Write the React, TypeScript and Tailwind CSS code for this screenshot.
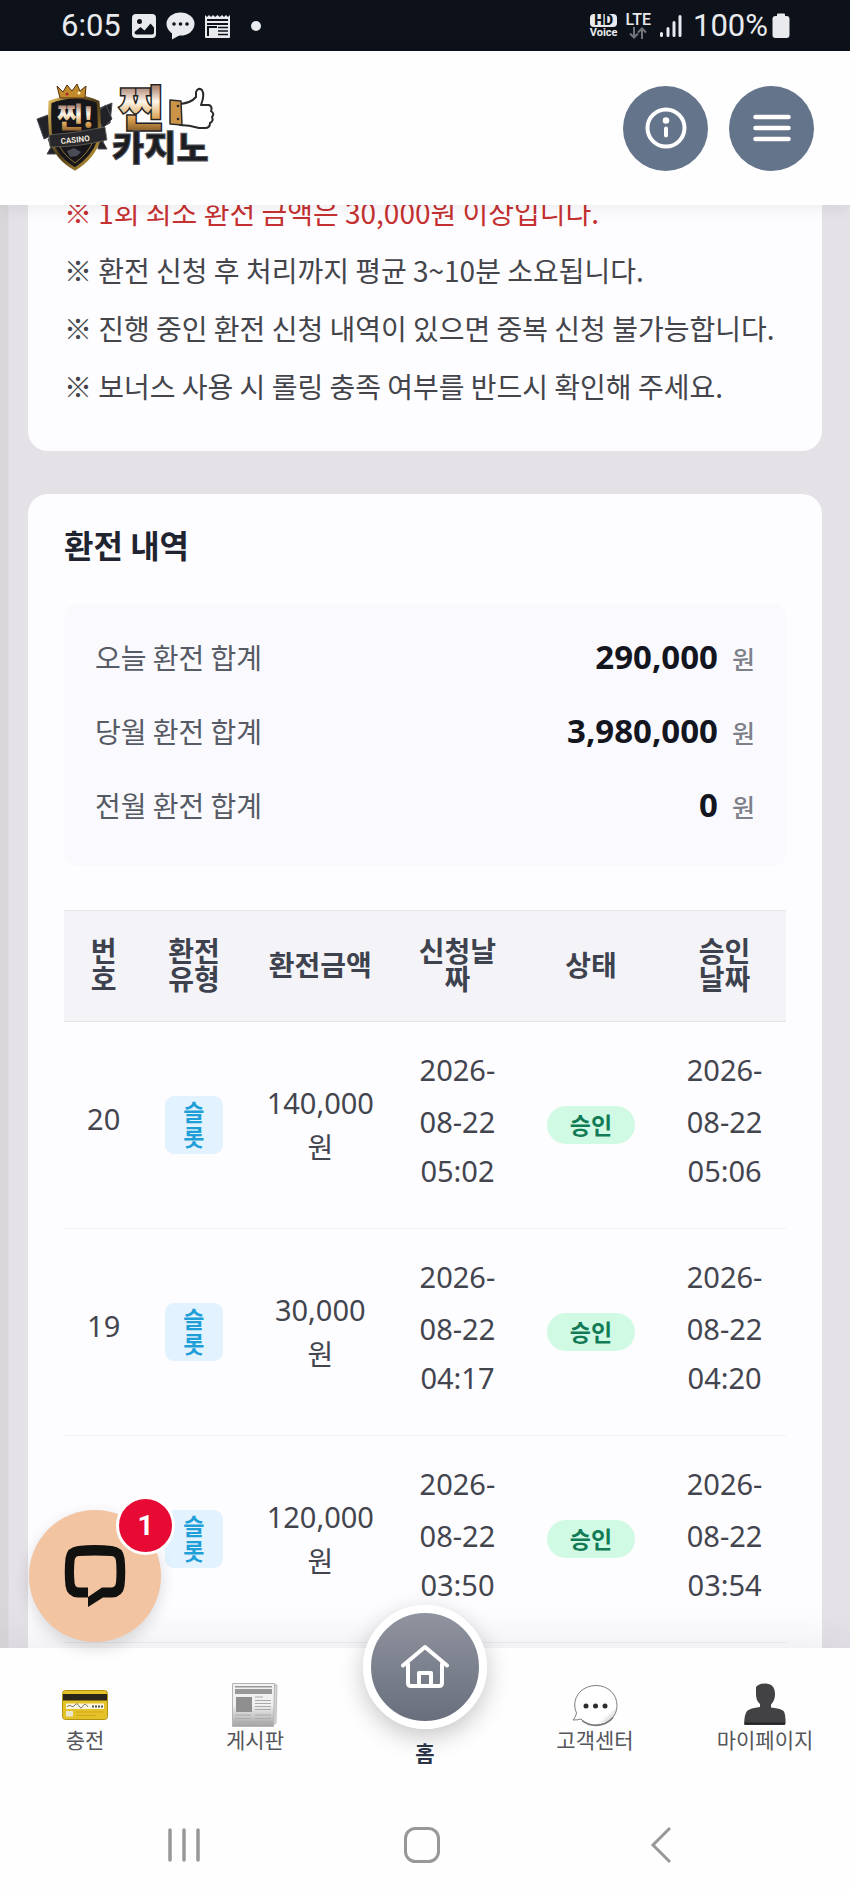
const notices = [
  { text: '※ 1회 최소 환전 금액은 30,000원 이상입니다.', warn: true },
  { text: '※ 환전 신청 후 처리까지 평균 3~10분 소요됩니다.' },
  { text: '※ 진행 중인 환전 신청 내역이 있으면 중복 신청 불가능합니다.' },
  { text: '※ 보너스 사용 시 롤링 충족 여부를 반드시 확인해 주세요.' },
]

const totals = [
  { label: '오늘 환전 합계', amount: '290,000' },
  { label: '당월 환전 합계', amount: '3,980,000' },
  { label: '전월 환전 합계', amount: '0' },
]

const rows = [
  { id: 20, amount: '140,000', requested: ['2026-08-22', '05:02'], approved: ['2026-08-22', '05:06'] },
  { id: 19, amount: '30,000', requested: ['2026-08-22', '04:17'], approved: ['2026-08-22', '04:20'] },
  // the floating chat button covers this row's number
  { id: null, amount: '120,000', requested: ['2026-08-22', '03:50'], approved: ['2026-08-22', '03:54'] },
]

const StatusBar = () => (
  <div className="flex h-[51px] items-center justify-between bg-[#0d121a] pr-[60px] pl-[61px] font-[Roboto,sans-serif] text-[31px] leading-none text-[#e8eaed]">
    <div className="flex items-center">
      <span>6:05</span>
      <svg className="ml-[10px]" width="26" height="26" viewBox="0 0 26 26">
        <rect x="1" y="1" width="24" height="24" rx="4" fill="#e8eaed" />
        <circle cx="8.5" cy="8.5" r="2.5" fill="#0d121a" />
        <path d="M3.5 19l6-5 4 3.5 6-7 3.5 4v5q0 2-2 2H5.500q-2 0-2-2.500z" fill="#0d121a" />
      </svg>
      <svg className="ml-[9px]" width="29" height="28" viewBox="0 0 29 28">
        <ellipse cx="14.5" cy="12" rx="14" ry="11.5" fill="#e8eaed" />
        <path d="M6 19v8.500l9-5z" fill="#e8eaed" />
        <circle cx="8" cy="12" r="1.8" fill="#0d121a" />
        <circle cx="14.5" cy="12" r="1.8" fill="#0d121a" />
        <circle cx="21" cy="12" r="1.8" fill="#0d121a" />
      </svg>
      <svg className="ml-[9px]" width="27" height="26" viewBox="0 0 27 26">
        <path d="M1 2l2 2 2-2 2 2 2-2 2.200 2 2.300-2 2.300 2L18 2l2 2 2-2 2 2 2-2v22q0 1-1 1H2q-1 0-1-1z" fill="#e8eaed" />
        <path d="M3 7h21M3 11h21" stroke="#0d121a" strokeWidth="2" />
        <path d="M3 13h10v10H3z" fill="#0d121a" />
        <path d="M5 15h8v8H5z" fill="#e8eaed" />
        <path d="M14 14.500h10M14 18h10M14 21.500h10" stroke="#0d121a" strokeWidth="1.5" />
      </svg>
      <span className="ml-5 h-[10px] w-[10px] rounded-full bg-[#e8eaed]" />
    </div>
    <div className="flex items-center">
      <span className="flex flex-col items-center">
        <span className="rounded-sm bg-[#e8eaed] px-1 text-[14px] leading-[13px] font-black text-[#0d121a]">HD</span>
        <span className="text-[11px] leading-[11px] font-bold">Voice</span>
      </span>
      <span className="ml-2 flex flex-col items-center">
        <span className="text-[16px] leading-[14px] font-medium">LTE</span>
        <svg width="20" height="12" viewBox="0 0 20 12" fill="none" stroke="#70747a" strokeWidth="2">
          <path d="M6 0v10M2 6.500l4 4 4-4M14 12V2M10 5.500l4-4 4 4" />
        </svg>
      </span>
      <svg className="ml-2" width="24" height="24" viewBox="0 0 24 24" stroke="#e8eaed" strokeWidth="3" strokeLinecap="round">
        <path d="M2.500 19.500v2M9 14.500v7M15 8.500v13M21 2.500v19" />
      </svg>
      <span className="ml-[10px]">100%</span>
      <svg className="ml-1" width="18" height="26" viewBox="0 0 18 26" fill="#e8eaed">
        <path d="M5 1.500Q5 .5 6 .5h6q1 0 1 1V3h1.500q3 0 3 3v16q0 3-3 3h-11q-3 0-3-3V6q0-3 3-3H5z" />
      </svg>
    </div>
  </div>
)

const Logo = () => (
  <svg width="178" height="88" viewBox="0 0 178 88" className="overflow-visible font-['Noto_Sans_CJK_KR',sans-serif]">
    <defs>
      <linearGradient id="gold" x1="0" y1="0" x2="0" y2="1">
        <stop offset="0.25" stopColor="#b08a78" />
        <stop offset="0.45" stopColor="#fff6ea" />
        <stop offset="0.7" stopColor="#d9a050" />
        <stop offset="0.9" stopColor="#7d5424" />
      </linearGradient>
      <linearGradient id="rim" x1="0" y1="0" x2="1" y2="1">
        <stop offset="0" stopColor="#e3bd5e" />
        <stop offset="0.5" stopColor="#4a3814" />
        <stop offset="1" stopColor="#d5aa45" />
      </linearGradient>
    </defs>
    <g fill="#222329" stroke="#4c4c52">
      <path d="M1 35l11-4 5 20-9 4z" />
      <path d="M64 24l12-5-2 20-9 5z" />
      <path d="M70 21l6 14-9 9-8-14z" />
      <path d="M12 55l8-3v18H11l4-7zM70 50l-8-3v18h9l-4-7z" />
    </g>
    <path d="M40 13q12 0 22 5 2 20 1 38-6 18-24 29-19-11-24-29-2-20-1-38 12-5 26-5z" fill="#17171b" stroke="url(#rim)" strokeWidth="3" />
    <path d="M20 55q5 14 19 24 14-10 19-24" fill="none" stroke="#8a7137" strokeWidth="1" />
    <path d="M21 2l6 6 4-7 5 6 5-7 3 7 6-5-1 12H24z" fill="#c18a2c" stroke="#52300d" />
    <circle cx="31" cy="10" r="1.5" fill="#b3262c" />
    <circle cx="43" cy="9" r="1.5" fill="#fff0bd" />
    <text x="21" y="44" fontSize="28" fontWeight="900" fill="url(#gold)">찐!</text>
    <path d="M13 51q28-2 56-8l2 13q-28 7-57 7z" fill="#28272b" stroke="#75705f" strokeWidth="0.7" />
    <text x="25" y="60" fontSize="8" fontWeight="700" fill="#eee9df" className="font-[Roboto,sans-serif]" transform="rotate(-6 25 60)">CASINO</text>
    <path d="M31 67l7-3 7 4-4 4-7 1z" fill="#4a4b54" />
    <text x="83" y="42" fontSize="48" fontWeight="900" fill="url(#gold)" stroke="#222" strokeWidth="3" paintOrder="stroke">찐</text>
    <text x="76" y="77" fontSize="35" fontWeight="900" fill="#1c1d21" stroke="#55565b" strokeWidth="1">카지노</text>
    <path d="M144 20q11-1 16-7V8q2-5 6-2 3 5-1 15h8q4 2 2 6 4 3 1 6 2 4-2 6 0 5-5 5h-6q-10-3-19-3z" fill="#fff" stroke="#2a2a2c" strokeWidth="2" strokeLinejoin="round" />
    <path d="M134 16l11 1 1 24-12-1z" fill="#cc9448" stroke="#2a2a2c" strokeWidth="1.5" strokeLinejoin="round" />
    <circle cx="142" cy="22" r="1.3" fill="#2a2a2c" />
    <circle cx="142" cy="35" r="1.3" fill="#2a2a2c" />
  </svg>
)

const Header = () => (
  <header className="relative z-10 flex h-[154px] items-center justify-between bg-[#fefefe] px-9 shadow-[0_2px_16px_rgba(0,0,0,0.08)]">
    <a href="#" aria-label="찐카지노">
      <Logo />
    </a>
    <div className="flex gap-[21px]">
      <button aria-label="안내" className="flex h-[85px] w-[85px] items-center justify-center rounded-full bg-[#64748b]">
        <svg width="42" height="42" viewBox="0 0 42 42" fill="none" stroke="#fff" strokeLinecap="round">
          <circle cx="21" cy="21" r="18.5" strokeWidth="4" />
          <path d="M21 21.500v7" strokeWidth="4" />
          <circle cx="21" cy="13.5" r="3.3" fill="#fff" stroke="none" />
        </svg>
      </button>
      <button aria-label="메뉴" className="flex h-[85px] w-[85px] items-center justify-center rounded-full bg-[#64748b]">
        <svg width="38" height="28" viewBox="0 0 38 28" stroke="#fff" strokeWidth="4.5" strokeLinecap="round">
          <path d="M2.500 3h33M2.500 14h33M2.500 25h33" />
        </svg>
      </button>
    </div>
  </header>
)

const DateCell = ({ value }) => (
  <td className="px-4 pt-[22px] pb-[34px]">
    <div className="leading-[52px]">{value[0]}</div>
    <div className="leading-[46px]">{value[1]}</div>
  </td>
)

const HistoryTable = () => (
  <table className="w-full table-fixed border-collapse text-center text-[29px] text-[#43454e]">
    <colgroup>
      <col className="w-[11%]" />
      <col className="w-[14%]" />
      <col className="w-[21%]" />
      <col className="w-[17%]" />
      <col className="w-[20%]" />
      <col className="w-[17%]" />
    </colgroup>
    <thead>
      <tr className="h-[111px] border-y border-[#e4e4e9] bg-[#f4f4f8] text-[28px] leading-7 text-[#3d424e]">
        {['번호', '환전 유형', '환전금액', '신청날짜', '상태', '승인 날짜'].map((name) => (
          <th key={name} className="px-5 pb-[3px] font-bold">
            {name}
          </th>
        ))}
      </tr>
    </thead>
    <tbody>
      {rows.map((row) => (
        <tr key={row.requested[1]} className="border-b border-[#f1f0f4]">
          <td className="pb-3">{row.id}</td>
          <td>
            <span className="inline-block w-[58px] rounded-[9px] bg-[#e2f2fe] px-4 py-1 align-middle text-[23px] leading-[25px] font-bold text-[#1f9fd8]">
              슬롯
            </span>
          </td>
          <td className="leading-[44px]">
            {row.amount}
            <span className="block text-[28px]">원</span>
          </td>
          <DateCell value={row.requested} />
          <td className="pb-[6px]">
            <span className="inline-block rounded-full bg-[#d1fae5] px-[23px] py-1 align-middle text-[23px] leading-[30px] font-bold text-[#127a55]">
              승인
            </span>
          </td>
          <DateCell value={row.approved} />
        </tr>
      ))}
    </tbody>
  </table>
)

const ChatButton = () => (
  <button
    aria-label="채팅 열기"
    className="absolute -top-[138px] left-[29px] z-20 flex h-[132px] w-[132px] items-center justify-center rounded-full bg-[#f2c4a1] shadow-[0_6px_16px_rgba(0,0,0,0.14)]"
  >
    <svg width="62" height="62" viewBox="0 0 62 62" fill="#11120f">
      <path
        fillRule="evenodd"
        d="M14 1Q31-1 48 1q11 1 12.500 12 1.500 14 0 28Q59 52 48 52.500h-9L24 62V52.500H14Q3 52 1.500 41 0 27 1.500 13 3 2 14 1zM15 11q-4 0-4.500 5-1 10 0 21 0 5.500 5 5.500H24V52l14-9.500h9q4.500 0 5-5 1-11 0-21.500-.5-5-5-5Q31 10 15 11z"
      />
    </svg>
    <span className="absolute -top-[14px] left-[87px] flex h-[59px] w-[59px] items-center justify-center rounded-full border-3 border-white bg-[#e60a35] font-[Roboto,sans-serif] text-[28px] font-bold text-white">
      1
    </span>
  </button>
)

const CardIcon = () => (
  <svg width="46" height="46" viewBox="0 0 46 46">
    <rect x="0.5" y="8.5" width="45" height="29" rx="3" fill="#e6c229" stroke="#b39312" />
    <path d="M1 12h44v6.500H1z" fill="#2b261a" />
    <path d="M4 21.500h38v5.500H4z" fill="#fbf6e0" />
    <path d="M5 25q2-3 4-1t4-1 4 1 4 0 5 1" fill="none" stroke="#777" />
    <path d="M30 24.500h11" stroke="#555" strokeWidth="2" strokeDasharray="2 1" />
    <path d="M4 29h7v5.500H4z" fill="#e8e6cf" />
    <path d="M14 30h27M14 33.500h20" stroke="#cfa91c" />
  </svg>
)

const NewsIcon = () => (
  <svg width="46" height="46" viewBox="0 0 46 46">
    <defs>
      <linearGradient id="paper" x1="0" y1="0" x2="0" y2="1">
        <stop offset="0.5" stopColor="#f1f1f1" />
        <stop offset="1" stopColor="#a3a3a3" />
      </linearGradient>
    </defs>
    <path d="M40 2l5 1-1 38-4 3z" fill="#d5d5d5" stroke="#aaa" strokeWidth="0.7" />
    <path d="M.5 1.500h42l-1 43H.5z" fill="url(#paper)" stroke="#b5b5b5" />
    <path d="M3 4h37v1.500H3zM3 7h37v5H3z" fill="#999" />
    <path d="M4 15h16v15H4z" fill="#8f8f8f" />
    <path d="M23 15h8M23 18.500h16M23 21.500h16M23 24.500h16M23 27.500h16M3 33h16M23 33h16M3 36.500h16M23 36.500h16M3 40h36" stroke="#aaa" />
  </svg>
)

const SupportIcon = () => (
  <svg width="46" height="46" viewBox="0 0 46 46">
    <defs>
      <linearGradient id="bubble" x1="0" y1="0" x2="1" y2="1">
        <stop offset="0.75" stopColor="#fff" />
        <stop offset="1" stopColor="#a0a0a0" />
      </linearGradient>
    </defs>
    <path d="M24 3.500C36 3.500 45 12 45 23.500S36 43 24 43c-6 0-11-2-15-6q-3 1-8 1 3-3 3.500-7-1.800-4-1.800-8C2.700 12 12 3.500 24 3.500z" fill="url(#bubble)" stroke="#808080" />
    <path d="M10 38.500q6 5 14 5 11-.5 17-8" fill="none" stroke="#777" strokeWidth="1.5" />
    <circle cx="14" cy="24" r="2.5" fill="#2c2c2c" />
    <circle cx="23.5" cy="24" r="2.5" fill="#2c2c2c" />
    <circle cx="33" cy="24" r="2.5" fill="#2c2c2c" />
  </svg>
)

const UserIcon = () => (
  <svg width="46" height="46" viewBox="0 0 46 46">
    <path d="M14 5q3-3.500 9-3.500 10 0 10 11 0 6-4 10v3q11 1 13 4 2 4 1.500 12.500-.5 1-2 1h-38q-1.500 0-1.500-1Q2.500 32 5 29q3-3 13-4v-3q-4-3-4-10z" fill="#424244" />
    <path d="M3 41.500h40" stroke="#252527" strokeWidth="2" />
  </svg>
)

const NavItem = ({ label, icon }) => (
  <a href="#" className="flex flex-1 flex-col items-center pt-[34px]">
    {icon}
    {label}
  </a>
)

const BottomNav = () => (
  <nav className="relative flex h-[142px] bg-[#fefefe] text-[21px] leading-6 text-[#55565b] shadow-[0_-4px_40px_rgba(40,40,60,0.09)]">
    <ChatButton />
    <NavItem label="충전" icon={<CardIcon />} />
    <NavItem label="게시판" icon={<NewsIcon />} />
    <a href="#" className="-mt-[43px] flex flex-1 flex-col items-center gap-3 font-bold text-[#2b3447]">
      <span className="flex h-[124px] w-[124px] items-center justify-center rounded-full border-8 border-white bg-linear-to-b from-[#9397a2] to-[#666c7a] bg-origin-border shadow-[0_8px_24px_rgba(0,0,0,0.22)]">
        <svg width="48" height="44" viewBox="0 0 48 44" fill="none" stroke="#fff" strokeWidth="4" strokeLinecap="round" strokeLinejoin="round">
          <path d="M2 20.500L24 2l22 18.500" />
          <path d="M7 19v19q0 3 3 3h28q3 0 3-3V19" />
          <path d="M18 41V28h12v13" />
        </svg>
      </span>
      홈
    </a>
    <NavItem label="고객센터" icon={<SupportIcon />} />
    <NavItem label="마이페이지" icon={<UserIcon />} />
  </nav>
)

const SystemBar = () => (
  <div className="relative grid h-[105px] grid-cols-3 place-items-center bg-[#fefefe] pt-1 pr-[70px] pl-[65px]">
    <button aria-label="최근 앱">
      <svg width="36" height="36" viewBox="0 0 36 36" stroke="#98989b" strokeWidth="3.5" strokeLinecap="round">
        <path d="M4 3v30M18 3v30M32 3v30" />
      </svg>
    </button>
    <button aria-label="홈 화면">
      <svg width="36" height="36" viewBox="0 0 36 36" fill="none" stroke="#98989b" strokeWidth="3">
        <rect x="1.5" y="1.5" width="33" height="33" rx="10" />
      </svg>
    </button>
    <button aria-label="뒤로">
      <svg width="22" height="38" viewBox="0 0 22 38" fill="none" stroke="#98989b" strokeWidth="3">
        <path d="M20 2L3 19l17 17" />
      </svg>
    </button>
  </div>
)

export default function App() {
  return (
    <div className="flex min-h-screen flex-col font-['Noto_Sans','Noto_Sans_CJK_KR',sans-serif]">
      <StatusBar />
      <Header />
      <main className="flex flex-1 flex-col overflow-hidden bg-linear-to-r from-[#d8d6d9] from-[8px] to-[#e4e2e7] to-[9px] px-7">
        <section className="-mt-[22px] rounded-[20px] bg-[#fdfcfe] px-9 pb-9 font-['Noto_Sans_CJK_KR',sans-serif] text-[28px] leading-[58px] text-[#43454b]">
          {notices.map((notice) => (
            <p key={notice.text} className={notice.warn ? 'text-[#c53030]' : ''}>
              {notice.text}
            </p>
          ))}
        </section>
        <section className="mt-[43px] flex-1 rounded-t-[20px] bg-[#fdfcfe] px-9 pt-[30px]">
          <h2 className="font-['Noto_Sans_CJK_KR',sans-serif] text-[32px] leading-10 font-bold text-[#1f2430]">환전 내역</h2>
          <dl className="mt-10 rounded-xl bg-[#fafafe] px-[31px] pt-7 pb-[38px]">
            {totals.map((total) => (
              <div key={total.label} className="mb-[26px] flex h-12 items-baseline justify-between last:mb-0">
                <dt className="font-['Noto_Sans_CJK_KR',sans-serif] text-[28px] text-[#565b65]">{total.label}</dt>
                <dd className="flex items-baseline gap-[14px] text-[33px] font-bold text-[#14161f]">
                  {total.amount}
                  <span className="text-[25px] font-medium text-[#7d8088]">원</span>
                </dd>
              </div>
            ))}
          </dl>
          <div className="mt-11">
            <HistoryTable />
          </div>
        </section>
      </main>
      <BottomNav />
      <SystemBar />
    </div>
  )
}
